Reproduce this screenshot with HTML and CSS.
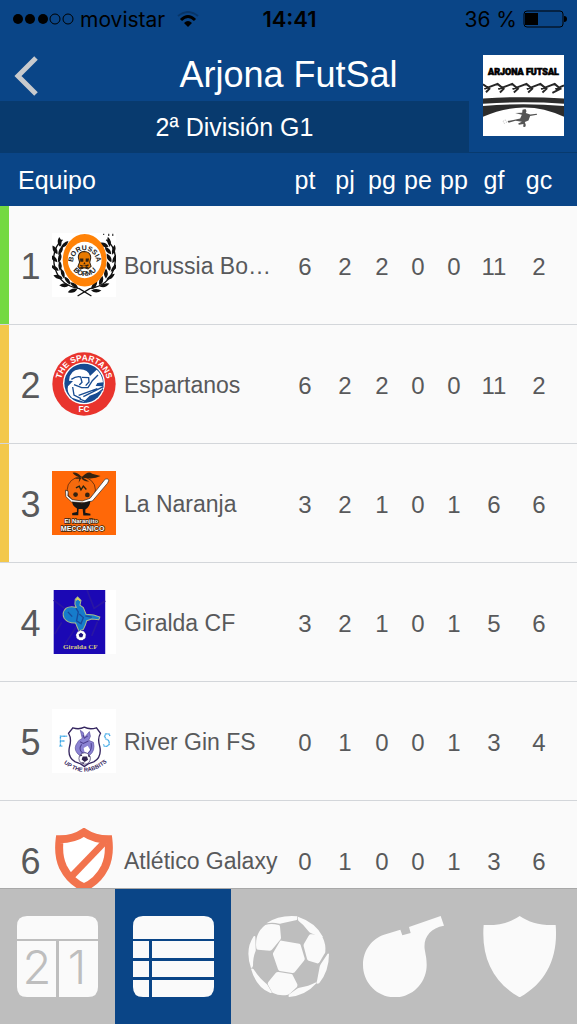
FILE: index.html
```html
<!DOCTYPE html>
<html lang="es">
<head>
  <meta charset="UTF-8">
  <meta name="viewport" content="width=device-width, initial-scale=1">
  <title>Arjona FutSal</title>
  <link rel="stylesheet" href="styles.css">
</head>
<body>
  <div class="status-bar">
    <div class="carrier">
      <svg class="signal" viewBox="0 0 62 12">
        <circle cx="6" cy="6" r="5"/><circle cx="18" cy="6" r="5"/><circle cx="31" cy="6" r="5"/>
        <circle class="hollow" cx="43" cy="6" r="5"/><circle class="hollow" cx="56" cy="6" r="5"/>
      </svg>
      <span>movistar</span>
      <svg class="wifi" viewBox="0 0 22 16">
        <path d="M1 5Q11 -3 21 5" fill="none" stroke="#083568" stroke-width="2"/>
        <path d="M4 9Q11 2 18 9" fill="none" stroke="#000" stroke-width="3"/>
        <path d="M7 12Q11 8 15 12L11 16Z"/>
      </svg>
    </div>
    <div class="clock">14:41</div>
    <div class="battery">
      <span>36 %</span>
      <svg viewBox="0 0 44 18">
        <rect x="1" y="1" width="39" height="16" rx="3" fill="none" stroke="#000"/>
        <rect x="2" y="3" width="13" height="12"/>
        <path d="M41 6Q44 6 44 9Q44 12 41 12Z"/>
      </svg>
    </div>
  </div>

  <header class="header">
    <button class="back" aria-label="Volver">
      <svg viewBox="0 0 24 40"><path d="M22 2L4 20L22 38" fill="none" stroke="#c8cacd" stroke-width="5"/></svg>
    </button>
    <h1>Arjona FutSal</h1>
    <h2>2ª División G1</h2>
    <svg class="logo" viewBox="39 27 244 244">
      <rect x="39" y="27" width="244" height="244" fill="#fff"/>
      <text class="logo-text" x="161" y="87" text-anchor="middle">ARJONA FUTSAL</text>
      <path d="M39 115L58 129L48 139M43 129L83 114L101 129L90 140M85 130L127 114L144 129L132 140M128 130L170 114L187 129L175 140M171 130L212 114L230 129L218 140M214 130L255 114L272 129L248 141M257 130L283 119" fill="none" stroke="#262626" stroke-width="6"/>
      <path d="M39 158Q161 150 283 158V174Q161 165 39 174Z" fill="#2c2c2c"/>
      <path d="M39 181Q161 170 283 181V213Q220 184 161 185Q100 186 39 213Z" fill="#2c2c2c"/>
      <path d="M158 192L167 190L170 196L168 202L181 206L201 204L202 207L181 211L176 224L165 229L168 238L166 244L160 243L161 235L147 237L145 233L156 228L137 225L116 231L113 226L134 222L151 218L156 207L136 202L157 201Z" fill="#555"/>
      <circle cx="105" cy="228" r="5" fill="none" stroke="#aaa" stroke-width="2" stroke-dasharray="4 3"/>
    </svg>
  </header>

  <main class="content">
    <table class="standings">
      <colgroup>
        <col class="col-pos"><col class="col-crest"><col>
        <col class="col-l"><col class="col-l"><col class="col-s"><col class="col-m"><col class="col-s"><col class="col-xl"><col class="col-last">
      </colgroup>
      <thead>
        <tr>
          <th class="team" colspan="3" scope="col">Equipo</th>
          <th scope="col">pt</th><th scope="col">pj</th><th scope="col">pg</th><th scope="col">pe</th><th scope="col">pp</th><th scope="col">gf</th><th class="last" scope="col">gc</th>
        </tr>
      </thead>
      <tbody>
        <tr class="promotion">
          <td class="pos">1</td>
          <td class="badge">
            <svg class="crest" viewBox="156 25 190 190">
              <defs>
                <path id="borussia" d="M218 114A35 38 0 0 1 288 114"/>
                <path id="bormu" d="M208 106A45 47 0 0 0 298 106"/>
                <path id="leaf" d="M0 0Q-17 -4 -17 -24Q2 -17 0 0ZM3 2Q0 -16 13 -27Q19 -8 3 2Z"/>
              </defs>
              <rect x="156" y="25" width="190" height="190" fill="#fff"/>
              <g fill="none" stroke="#111" stroke-width="4">
                <path d="M187 45Q151 75 165 130Q181 182 237 190L273 212"/>
                <path d="M317 45Q355 75 340 130Q324 182 268 190L232 212"/>
              </g>
              <g fill="#111">
                <use href="#leaf" transform="translate(180 66) rotate(30)"/>
                <use href="#leaf" transform="translate(172 88) rotate(6)"/>
                <use href="#leaf" transform="translate(172 112) rotate(-8)"/>
                <use href="#leaf" transform="translate(176 137) rotate(-20)"/>
                <use href="#leaf" transform="translate(188 160) rotate(-36)"/>
                <use href="#leaf" transform="translate(207 180) rotate(-55)"/>
                <use href="#leaf" transform="translate(231 192) rotate(-72)"/>
                <use href="#leaf" transform="translate(324 66) rotate(-30)"/>
                <use href="#leaf" transform="translate(332 88) rotate(-6)"/>
                <use href="#leaf" transform="translate(332 112) rotate(8)"/>
                <use href="#leaf" transform="translate(328 137) rotate(20)"/>
                <use href="#leaf" transform="translate(316 160) rotate(36)"/>
                <use href="#leaf" transform="translate(297 180) rotate(55)"/>
                <use href="#leaf" transform="translate(273 192) rotate(72)"/>
                <path d="M308 27h3v4h-3zM323 27h3v7h-3zM335 27h3v7h-3z"/>
              </g>
              <ellipse cx="253" cy="106" rx="65" ry="78" fill="#ff8207"/>
              <ellipse cx="253" cy="105" rx="50" ry="54" fill="#fff"/>
              <text class="crest-text bormu-text"><textPath href="#borussia" startOffset="50%" text-anchor="middle">BORUSSIA</textPath></text>
              <text class="crest-text bormu-text"><textPath href="#bormu" startOffset="50%" text-anchor="middle">BORMU</textPath></text>
              <path d="M234 97Q235 80 252 80Q271 81 271 99L268 112L272 124L263 132L252 128L240 132L233 124L238 112Z" fill="#e87900" stroke="#321" stroke-width="3"/>
              <path d="M239 101h10v9h-9zM256 101h10l-2 9h-8zM252 111l4 7h-7zM240 119l25 8-3 4-23-9zM264 118l-25 9 3 4 23-9z" fill="#321"/>
            </svg>
          </td>
          <td class="name">Borussia Bo…</td>
          <td>6</td><td>2</td><td>2</td><td>0</td><td>0</td><td>11</td><td class="last">2</td>
        </tr>
        <tr class="playoff">
          <td class="pos">2</td>
          <td class="badge">
            <svg class="crest" viewBox="156 27 192 192">
              <defs>
                <path id="spartans" d="M186 146A70 70 0 1 1 318 146"/>
              </defs>
              <circle cx="252" cy="123" r="95" fill="#e9342d"/>
              <circle cx="252" cy="121" r="63" fill="#fff"/>
              <circle cx="252" cy="121" r="59" fill="#174b91"/>
              <text class="crest-text spartan-text"><textPath href="#spartans" startOffset="50%" text-anchor="middle">THE SPARTANS</textPath></text>
              <text class="crest-text spartan-text" x="252" y="208" text-anchor="middle">FC</text>
              <path d="M207 113Q209 81 239 79Q265 80 270 99L290 80Q306 93 309 118L292 120L287 129L309 130L305 145L269 158L251 176L216 164Q199 148 204 130L219 114Z" fill="#fff"/>
              <path d="M214 109Q230 98 242 102L246 118L238 126M246 103L266 104L267 117L257 128M222 125L245 134L264 134L277 113L294 96M218 132L222 156L243 167M236 157L292 137M250 161L310 131M239 168L259 176L309 139" fill="none" stroke="#174b91" stroke-width="4"/>
            </svg>
          </td>
          <td class="name">Espartanos</td>
          <td>6</td><td>2</td><td>2</td><td>0</td><td>0</td><td>11</td><td class="last">2</td>
        </tr>
        <tr class="playoff">
          <td class="pos">3</td>
          <td class="badge">
            <svg class="crest" viewBox="156 27 190 190">
              <rect x="156" y="27" width="190" height="190" fill="#ff6808"/>
              <ellipse cx="243" cy="83" rx="42" ry="39" fill="#f56a0d" stroke="#3a1c0c" stroke-width="2"/>
              <path d="M243 44Q230 29 217 32Q225 44 244 46Q263 25 275 35L300 42Q281 53 248 47L266 58Q249 59 243 48L235 62L237 50L221 50Z" fill="#321"/>
              <path d="M227 77L237 72L242 83L249 72L258 82" fill="none" stroke="#221" stroke-width="4"/>
              <circle cx="226" cy="97" r="7" fill="#321"/><circle cx="261" cy="98" r="7" fill="#321"/>
              <path d="M196 84L204 87L203 101L216 112L246 116L269 108L314 51Q320 48 325 54L321 63L276 116L252 121L214 119L197 103Z" fill="#fff" stroke="#222" stroke-width="2"/>
              <path d="M216 118L245 123L270 116Q268 134 255 141V151L270 154V159H249L247 140H235L234 158H216V152L230 149V138Q216 130 216 118Z" fill="#171515"/>
              <text class="crest-text mec-small" x="243" y="181" text-anchor="middle">El Naranjito</text>
              <text class="crest-text mec-large" x="247" y="206" text-anchor="middle">MECCANICO</text>
            </svg>
          </td>
          <td class="name">La Naranja</td>
          <td>3</td><td>2</td><td>1</td><td>0</td><td>1</td><td>6</td><td class="last">6</td>
        </tr>
        <tr>
          <td class="pos">4</td>
          <td class="badge">
            <svg class="crest" viewBox="156 25 190 190">
              <rect x="156" y="25" width="190" height="190" fill="#fff"/>
              <rect x="161" y="25" width="153" height="190" fill="#1b08b4"/>
              <path d="M161 55L240 116L195 185M260 25L281 80L314 57M185 121L164 156M291 119L274 161" fill="none" stroke="#2916a4" stroke-width="5"/>
              <path d="M225 53L232 46L242 56L239 70L249 77L257 97L280 99L298 105L295 113L274 111L259 116L255 129L249 142L236 147L226 123Q203 124 192 109Q184 92 198 79Q211 71 228 77L224 67Z" fill="#167ccb" stroke="#a9bd8c" stroke-width="3"/>
              <path d="M227 79L234 90L229 117L242 125L249 107L237 96M203 90L216 104M255 102L274 106" fill="none" stroke="#184a9b" stroke-width="4"/>
              <path d="M228 56L232 50L240 57" fill="none" stroke="#ead955" stroke-width="4"/>
              <circle cx="242" cy="160" r="15" fill="#fff" stroke="#231b80" stroke-width="2" stroke-dasharray="6 4"/>
              <path d="M242 152L249 157L246 165H238L235 157Z" fill="#1c127c"/>
              <text class="crest-text giralda-text" x="240" y="201" text-anchor="middle">Giralda CF</text>
            </svg>
          </td>
          <td class="name">Giralda CF</td>
          <td>3</td><td>2</td><td>1</td><td>0</td><td>1</td><td>5</td><td class="last">6</td>
        </tr>
        <tr>
          <td class="pos">5</td>
          <td class="badge">
            <svg class="crest" viewBox="156 27 190 190">
              <defs><path id="rabbits" d="M186 184Q252 244 324 181"/></defs>
              <rect x="156" y="27" width="190" height="190" fill="#fff"/>
              <path d="M218 83Q237 89 252 81Q267 89 288 83L300 99Q290 115 298 139Q304 171 280 184Q263 188 252 198Q241 188 225 184Q201 171 208 139Q215 115 205 99Z" fill="#fff" stroke="#352660" stroke-width="4"/>
              <path d="M240 90L249 97L252 112L267 94L270 108L265 120L279 126Q285 151 268 164H237Q220 151 227 134L235 121L246 114Z" fill="#8b83d3" stroke="#5a4d9d" stroke-width="2"/>
              <path d="M239 124L249 129L264 122M244 132Q233 147 247 158M272 128Q276 147 263 158M248 104L252 114L262 107" fill="none" stroke="#4e408f" stroke-width="3"/>
              <path d="M250 143L262 136L269 148L261 158L252 153Z" fill="#fff"/>
              <circle cx="253" cy="174" r="17" fill="#fff" stroke="#33265c" stroke-width="2"/>
              <path d="M247 168H260L263 178L253 184L244 177ZM237 168L243 161L246 166ZM264 161L270 170L263 168ZM242 185L249 190L253 186Z" fill="#30234f"/>
              <g fill="none" stroke="#35a4e5" stroke-width="4" stroke-dasharray="3 1">
                <path d="M181 137V108H201M181 122H194M178 137H187"/>
                <path d="M328 107L325 101H315L312 108L316 116L325 121L326 132L319 138H311L309 132"/>
              </g>
              <text class="crest-text rabbit-text"><textPath href="#rabbits" startOffset="50%" text-anchor="middle">UP THE RABBITS</textPath></text>
            </svg>
          </td>
          <td class="name">River Gin FS</td>
          <td>0</td><td>1</td><td>0</td><td>0</td><td>1</td><td>3</td><td class="last">4</td>
        </tr>
        <tr>
          <td class="pos">6</td>
          <td class="badge">
            <svg class="crest" viewBox="156 38 192 192">
              <path d="M252 51Q283 72 325 72Q331 120 315 155Q293 199 252 216Q211 199 189 155Q173 120 179 72Q222 72 252 51Z" fill="#fff" stroke="#f2734d" stroke-width="24"/>
              <path d="M314 80L211 187" fill="none" stroke="#f2734d" stroke-width="20"/>
            </svg>
          </td>
          <td class="name">Atlético Galaxy</td>
          <td>0</td><td>1</td><td>0</td><td>0</td><td>1</td><td>3</td><td class="last">6</td>
        </tr>
      </tbody>
    </table>
  </main>

  <nav class="tab-bar">
    <a class="tab" href="#" aria-label="Calendario">
      <svg viewBox="0 0 81 81">
        <path d="M10 0H71Q81 0 81 10V23H0V10Q0 0 10 0ZM0 25H39V81H10Q0 81 0 71ZM42 25H81V71Q81 81 71 81H42Z"/>
        <text class="day" x="20" y="68" text-anchor="middle">2</text>
        <text class="day" x="60" y="68" text-anchor="middle">1</text>
      </svg>
    </a>
    <a class="tab active" href="#" aria-label="Clasificación" aria-current="page">
      <svg viewBox="0 0 81 81">
        <path d="M10 0H71Q81 0 81 10V23H0V10Q0 0 10 0ZM0 25H16V42H0ZM19 25H81V42H19ZM0 45H16V61H0ZM19 45H81V61H19ZM0 64H16V81H10Q0 81 0 71ZM19 64H81V71Q81 81 71 81H19Z"/>
      </svg>
    </a>
    <a class="tab" href="#" aria-label="Partidos">
      <svg viewBox="24 29 243 243">
        <path d="M125 103L178 112Q181 113 182 116L194 156Q195 160 192 163L164 198Q161 201 157 200L119 194Q115 193 114 189L99 145Q98 141 101 137L119 106Q121 102 125 103Z"/>
        <path d="M76 56Q93 50 116 56Q120 57 120 61L123 94Q123 98 120 101L97 129Q94 133 90 133L54 130Q50 130 49 126Q43 81 76 56Z"/>
        <path d="M79 51Q118 25 172 30V38Q171 42 167 42L126 51Q122 53 118 52Q98 47 79 51Z"/>
        <path d="M174 31Q228 49 249 92Q246 96 240 92L212 80Q208 78 205 74Q191 55 176 44Q173 41 174 31Z"/>
        <path d="M211 84Q226 82 244 91Q247 92 249 96Q258 115 256 136Q256 140 253 143L239 167Q236 172 231 171L206 163Q202 161 201 157L191 120Q190 116 192 112L206 88Q208 85 211 84Z"/>
        <path d="M263 142Q266 140 267 143Q267 194 238 230Q233 234 229 231Q229 228 231 224L239 181Q240 177 243 172Z"/>
        <path d="M229 231Q197 268 147 272Q143 270 148 264L170 248Q173 245 178 244Q207 239 225 229Q229 228 229 231Z"/>
        <path d="M116 197L154 203Q158 204 159 208L172 234Q173 238 171 242L151 261Q148 264 144 265Q120 270 99 260Q95 258 94 253L84 235Q82 231 85 227L107 200Q110 196 116 197Z"/>
        <path d="M33 187Q37 186 41 189Q58 216 79 232Q82 234 83 237L95 257Q96 261 91 260Q48 242 33 187Z"/>
        <path d="M41 90Q46 87 46 92L47 128Q48 132 46 136Q39 153 39 178Q38 185 33 185Q14 130 41 90Z"/>
      </svg>
    </a>
    <a class="tab" href="#" aria-label="Árbitros">
      <svg viewBox="229 301 243 243">
        <path d="M462 301L472 330C430 337 410 366 414 400C417 420 420 427 420 448C420 502 377 545 325 545C272 545 229 502 229 448C229 402 257 369 292 357L341 342L347 359L372 352L367 334Z"/>
      </svg>
    </a>
    <a class="tab" href="#" aria-label="Equipos">
      <svg viewBox="575 301 243 243">
        <path d="M697 301C725 320 758 330 805 328C813 425 777 500 697 545C617 500 581 425 589 328C636 330 669 320 697 301Z"/>
      </svg>
    </a>
  </nav>
</body>
</html>
```
FILE: styles.css
```css
* {
  margin: 0;
  padding: 0;
  box-sizing: border-box;
}

body {
  font-family: "Liberation Sans", Arial, sans-serif;
  background: #fafafa;
  color: #58595b;
  height: 100vh;
  display: flex;
  flex-direction: column;
}

svg {
  display: block;
}

/* Status bar */
.status-bar {
  display: grid;
  grid-template-columns: 1fr auto 1fr;
  align-items: center;
  height: 38px;
  padding: 0 10px 0 12px;
  background: #0a4587;
  color: #000;
  font-family: Inter, sans-serif;
  font-size: 21px;
}

.carrier,
.battery {
  display: flex;
  align-items: center;
  gap: 6px;
}

.battery {
  justify-content: flex-end;
}

.battery svg {
  width: 44px;
  height: 18px;
}

.signal {
  width: 62px;
  height: 12px;
}

.hollow {
  fill: none;
  stroke: #000;
}

.wifi {
  width: 22px;
  height: 16px;
  margin-left: 6px;
}

.clock {
  font-size: 22px;
  font-weight: 600;
}

/* Header */
.header {
  display: grid;
  grid-template-columns: 108px 1fr 108px;
  grid-template-rows: 63px 51px;
  align-items: center;
  background: #0a4587;
  color: #fff;
  text-align: center;
}

.header h1 {
  padding-top: 10px;
  font-size: 36px;
  font-weight: 400;
}

.header h2 {
  grid-column: 1 / 3;
  grid-row: 2;
  align-self: stretch;
  background: #083a6e;
  font-size: 25px;
  font-weight: 400;
  line-height: 52px;
}

.back {
  justify-self: start;
  padding: 12px 14px 0;
  background: none;
  border: none;
  cursor: pointer;
}

.back svg {
  width: 24px;
  height: 40px;
}

.logo {
  grid-column: 3;
  grid-row: 1 / 3;
  justify-self: center;
  width: 81px;
  height: 81px;
}

.logo-text {
  font-family: Roboto, sans-serif;
  font-size: 27px;
  font-weight: 900;
  stroke: #000;
  stroke-width: 2px;
}

/* Standings */
.content {
  flex: 1;
  min-height: 0;
  overflow-y: auto;
  scrollbar-width: none;
}

.standings {
  width: 100%;
  table-layout: fixed;
  border-spacing: 0;
  font-size: 24px;
  text-align: center;
}

.col-pos { width: 52px; }
.col-crest { width: 64px; }
.col-s { width: 34px; }
.col-m { width: 38px; }
.col-l { width: 40px; }
.col-xl { width: 46px; }
.col-last { width: 60px; }

.standings th {
  height: 54px;
  padding-top: 2px;
  background: #0a4587;
  border-top: 1px solid #083a6e;
  color: #fff;
  font-size: 25px;
  font-weight: 400;
}

.standings .team {
  padding-left: 18px;
  text-align: left;
}

.standings td {
  height: 119px;
  padding-top: 3px;
  border-bottom: 1px solid #d3d6da;
}

.standings .badge {
  padding-top: 0;
}

.standings .last {
  padding-right: 16px;
}

.standings .pos {
  padding-left: 9px;
  font-size: 36px;
}

.promotion .pos {
  box-shadow: inset 9px 0 #74d942;
}

.playoff .pos {
  box-shadow: inset 9px 0 #f3c84b;
}

.standings .name {
  padding-left: 8px;
  overflow: hidden;
  font-size: 23px;
  text-align: left;
  text-overflow: ellipsis;
  white-space: nowrap;
}

.crest {
  width: 64px;
  height: 64px;
}

.crest-text {
  font-weight: 700;
}

.bormu-text {
  font-size: 21px;
  fill: #222;
}

.spartan-text {
  font-size: 25px;
  fill: #fff;
}

.mec-small,
.mec-large {
  fill: #fff;
  stroke: #321;
  stroke-width: 4px;
  paint-order: stroke;
}

.mec-small {
  font-size: 18px;
}

.mec-large {
  font-size: 21px;
}

.giralda-text {
  font-family: "Liberation Serif", serif;
  font-size: 21px;
  fill: #d8cb82;
}

.rabbit-text {
  font-size: 17px;
  fill: #352660;
}

/* Tab bar */
.tab-bar {
  display: flex;
  height: 136px;
  background: #bebebe;
  border-top: 1px solid #a8a8a8;
}

.tab {
  flex: 1;
  display: flex;
  align-items: center;
  justify-content: center;
}

.tab.active {
  background: #0a4587;
}

.tab svg {
  width: 81px;
  height: 81px;
  fill: #fafafa;
}

.tab .day {
  font-family: Inter, sans-serif;
  font-size: 47px;
  font-weight: 300;
  fill: #bebebe;
}
```
